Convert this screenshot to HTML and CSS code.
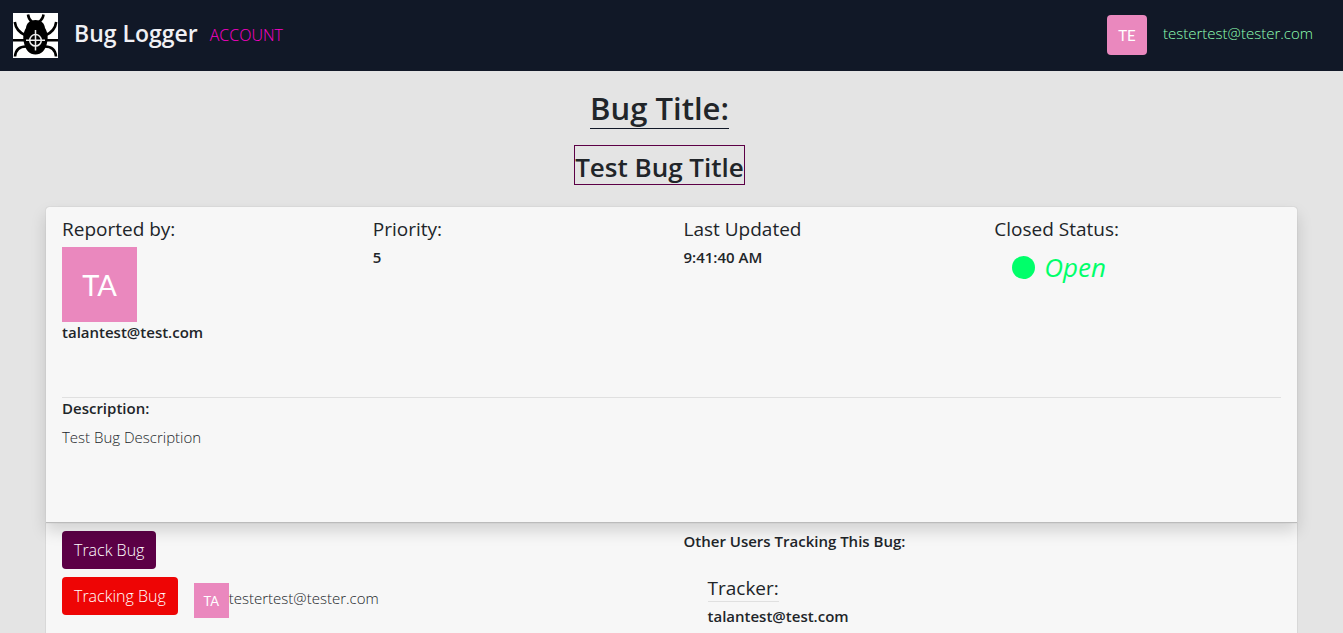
FILE: index.html
```html
<!DOCTYPE html>
<html lang="en">
<head>
<meta charset="utf-8">
<meta name="viewport" content="width=device-width, initial-scale=1">
<title>Bug Logger</title>
<link rel="stylesheet" href="styles.css">
</head>
<body>
<header class="navbar">
  <a class="brand" href="#">
    <svg class="logo" viewBox="0 0 45 45" role="img" aria-label="Bug Logger logo">
      <rect width="45" height="45" fill="#fff"/>
      <g fill="none" stroke="#000" stroke-width="2.6">
        <path d="M15 1.500Q15.500 6 19 9M30.500 1.500Q30 6 26 9"/>
        <path d="M1.800 9Q3 18 12 22M43.200 9Q42 18 33 22"/>
        <path d="M0 27.300H13M32 27.300H45"/>
        <path d="M2 43.500Q3 33 14 33.500M43 43.500Q42 33 31 33.500"/>
      </g>
      <path d="M22.500 7C28 7 31.500 10 32 15C34.500 19 35.500 24 34 30C32.500 37 28.500 41.500 22.500 41.500C16.500 41.500 12.500 37 11 30C9.500 24 10.500 19 13 15C13.500 10 17 7 22.500 7Z" fill="#000"/>
      <g fill="none" stroke="#eee" stroke-width="1.500">
        <circle cx="22.500" cy="27.300" r="5.800"/>
        <path d="M13 27.300H32M22.500 17V37.500"/>
      </g>
    </svg>
    <span class="brand-name">Bug Logger</span>
  </a>
  <a class="nav-link" href="#">ACCOUNT</a>
  <div class="user">
    <span class="avatar avatar-nav">TE</span>
    <a class="user-mail" href="#">testertest@tester.com</a>
  </div>
</header>
<main class="page">
  <div class="titles">
    <h1 class="title-label">Bug Title:</h1>
    <h2 class="title-value">Test Bug Title</h2>
  </div>
  <section class="card details">
    <div class="facts">
      <div>
        <h3 class="heading">Reported by:</h3>
        <span class="avatar avatar-large">TA</span>
        <p class="strong">talantest@test.com</p>
      </div>
      <div>
        <h3 class="heading">Priority:</h3>
        <p class="strong">5</p>
      </div>
      <div>
        <h3 class="heading">Last Updated</h3>
        <p class="strong">9:41:40 AM</p>
      </div>
      <div>
        <h3 class="heading">Closed Status:</h3>
        <p class="status"><span class="dot"></span><em>Open</em></p>
      </div>
    </div>
    <div class="description">
      <h4 class="strong">Description:</h4>
      <p class="text">Test Bug Description</p>
    </div>
  </section>
  <section class="card tracking">
    <div class="actions">
      <button class="btn btn-track" type="button">Track Bug</button>
      <div class="action-row">
        <button class="btn btn-tracking" type="button">Tracking Bug</button>
        <span class="avatar avatar-small">TA</span>
        <span class="tracker-mail">testertest@tester.com</span>
      </div>
    </div>
    <div class="others">
      <h4 class="strong">Other Users Tracking This Bug:</h4>
      <div class="tracker">
        <h3 class="heading tracker-label">Tracker:</h3>
        <p class="strong">talantest@test.com</p>
      </div>
    </div>
  </section>
</main>
</body>
</html>
```
FILE: styles.css
```css
* {
  box-sizing: border-box;
}

body {
  display: flex;
  flex-direction: column;
  min-height: 100vh;
  margin: 0;
  background: #e4e4e4;
  color: #212529;
  font: 300 15px/24px "Open Sans", "Noto Sans", sans-serif;
}

h1, h2, h3, h4, p {
  margin: 0;
}

a {
  text-decoration: none;
}

.navbar {
  display: flex;
  align-items: center;
  height: 71px;
  padding: 0 30px 0 13px;
  background: #111827;
}

.brand {
  display: flex;
  align-items: center;
  gap: 16px;
}

.logo {
  width: 45px;
  height: 45px;
}

.brand-name {
  padding-bottom: 6px;
  color: #f0f0f4;
  font-size: 23px;
  font-weight: 600;
  line-height: 32px;
}

.nav-link {
  margin-left: 12px;
  padding-bottom: 2px;
  color: #ff00c8;
  font-size: 16px;
}

.user {
  display: flex;
  align-items: center;
  gap: 16px;
  margin-left: auto;
  padding-bottom: 2px;
}

.user-mail {
  padding-bottom: 4px;
  color: #90ffb4;
}

.avatar {
  display: flex;
  align-items: center;
  justify-content: center;
  background: #ea88be;
  color: #fff;
  font-family: Lato, sans-serif;
  font-weight: 400;
}

.avatar-nav {
  width: 40px;
  height: 40px;
  border-radius: 4px;
  font-size: 15px;
}

.avatar-large {
  width: 75px;
  height: 75px;
  font-size: 29px;
}

.avatar-small {
  width: 35px;
  height: 35px;
  margin: 6px 0 0 16px;
  font-size: 13px;
}

.page {
  display: flex;
  flex: 1;
  flex-direction: column;
  padding: 17px 46px 0;
}

.titles {
  display: flex;
  flex-direction: column;
  align-items: center;
  gap: 16px;
  padding: 0 24px 22px 0;
}

.title-label {
  border-bottom: 1px solid #111827;
  font-size: 31px;
  font-weight: 600;
  line-height: 40px;
}

.title-value {
  padding-top: 4px;
  border: 1px solid #5c0046;
  font-size: 26px;
  font-weight: 600;
  line-height: 34px;
}

.card {
  padding: 8px 16px;
  background: #f7f7f7;
}

.details {
  position: relative;
  min-height: 316px;
  border-bottom: 1px solid #bbb;
  border-radius: 3px 3px 0 0;
  box-shadow: 0 8px 16px rgba(0, 0, 0, 0.15), 0 0 1px rgba(0, 0, 0, 0.3);
}

.facts {
  display: grid;
  grid-template-columns: repeat(4, 1fr);
  gap: 24px;
  min-height: 182px;
}

.heading {
  padding-bottom: 4px;
  font-size: 19px;
  font-weight: 500;
  line-height: 28px;
}

.strong {
  font-size: 15px;
  font-weight: 600;
  line-height: 20px;
}

.status {
  display: flex;
  align-items: center;
  gap: 9px;
  padding: 2px 18px;
  color: #00ff6a;
  font-size: 26px;
  font-weight: 400;
  line-height: 36px;
}

.dot {
  width: 23px;
  height: 23px;
  border-radius: 50%;
  background: #00ff6a;
}

.description {
  border-top: 1px solid #e0e0e0;
}

.text {
  padding-top: 7px;
}

.tracking {
  display: grid;
  flex: 1;
  grid-template-columns: 1fr 1fr;
  gap: 24px;
  padding-bottom: 0;
  box-shadow: 0 0 1px rgba(0, 0, 0, 0.3);
}

.actions {
  display: flex;
  flex-direction: column;
  align-items: flex-start;
  gap: 8px;
}

.action-row {
  display: flex;
}

.btn {
  height: 38px;
  padding: 0 12px;
  border: 0;
  border-radius: 4px;
  color: #fff;
  font: inherit;
  font-size: 16px;
}

.btn-track {
  background: #5c0046;
}

.btn-tracking {
  background: #ee0505;
}

.tracker-mail {
  padding-top: 9px;
}

.tracker {
  padding: 24px 24px 0;
}

.tracker-label {
  display: inline-block;
  margin-bottom: 4px;
  padding: 0;
  border-bottom: 1px solid #e0e0e0;
  line-height: 26px;
}
```
